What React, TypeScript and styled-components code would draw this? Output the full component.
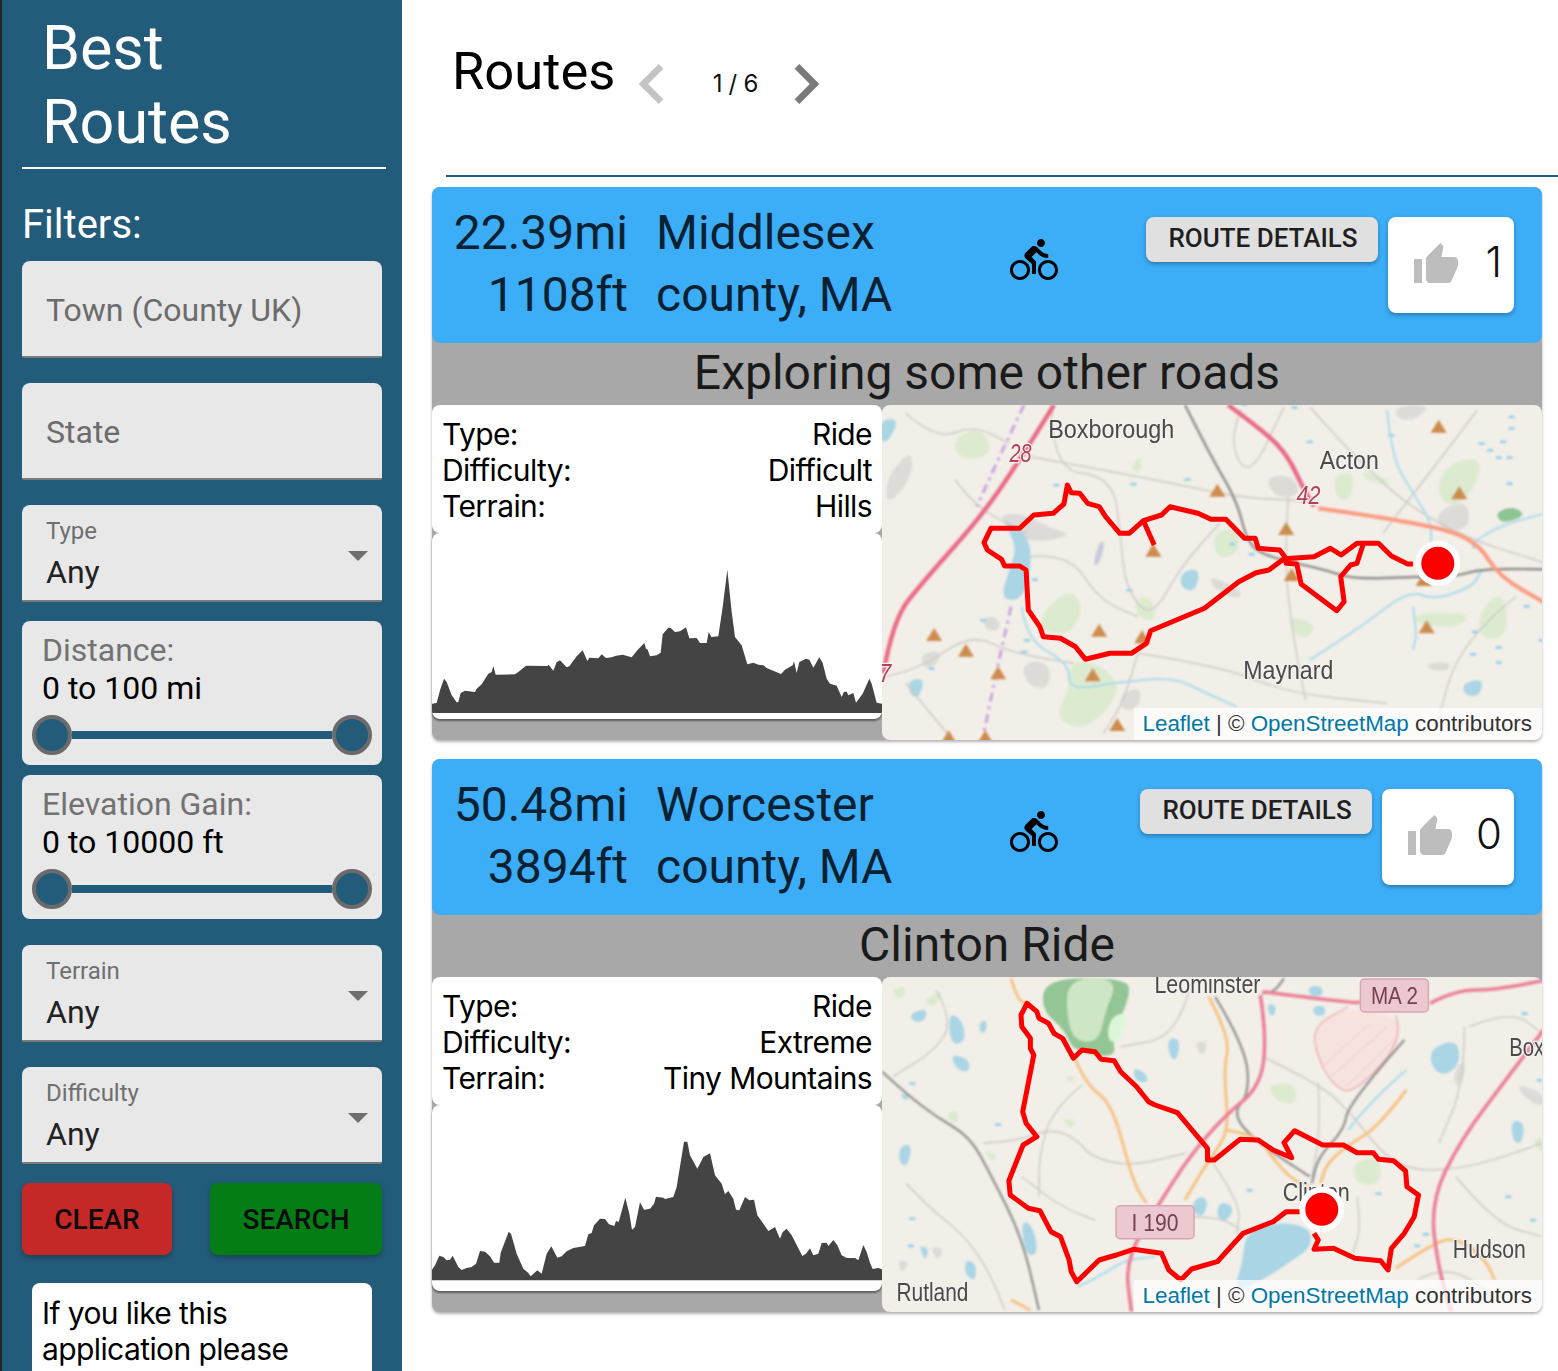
import React from 'react';
import styled, { createGlobalStyle } from 'styled-components';
import { MdChevronLeft, MdChevronRight, MdDirectionsBike, MdThumbUp } from 'react-icons/md';

const NAVY = '#235b7a';
const SYSTEM_FONT = 'Inter, "Liberation Sans", sans-serif';

const GlobalStyle = createGlobalStyle`
    html, body {
        margin: 0;
        padding: 0;
        background: #fff;
        font-family: Roboto, "Liberation Sans", sans-serif;
    }
    * {
        box-sizing: border-box;
    }
`;

const Page = styled.div`
    display: flex;
    width: 1558px;
    height: 1371px;
    overflow: hidden;
    border-left: 2px solid #20262a;
`;

const Sidebar = styled.aside`
    flex: 0 0 400px;
    display: flex;
    flex-direction: column;
    padding: 11px 0 0 20px;
    background: ${NAVY};
`;

const Brand = styled.h1`
    margin: 0;
    padding: 0 0 8px 20px;
    width: 364px;
    font-size: 61px;
    line-height: 74px;
    font-weight: 400;
    color: #fff;
    border-bottom: 2px solid #fff;
`;

const FiltersTitle = styled.div`
    margin: 33px 0 13px 0;
    font-size: 40px;
    line-height: 46px;
    color: #fff;
`;

const Field = styled.div<{ $top?: number }>`
    position: relative;
    flex: none;
    width: 360px;
    height: 97px;
    margin-top: ${props => props.$top ?? 0}px;
    padding: 2px 24px 0;
    display: flex;
    flex-direction: column;
    justify-content: center;
    background: #e8e8e8;
    border-radius: 8px 8px 2px 2px;
    border-bottom: 2px solid #7b7b7b;
`;

const Placeholder = styled.span`
    font-size: 32px;
    line-height: 36px;
    color: #6c6c6c;
`;

const SelectLabel = styled.span`
    font-size: 24px;
    line-height: 28px;
    color: #6f6f6f;
`;

const SelectValue = styled.span`
    margin-top: 8px;
    font-size: 32px;
    line-height: 38px;
    color: #222;
`;

const Caret = styled.i`
    position: absolute;
    right: 14px;
    top: 46px;
    width: 0;
    height: 0;
    border-left: 10px solid transparent;
    border-right: 10px solid transparent;
    border-top: 10px solid #6e6e6e;
`;

const SliderPanel = styled.div<{ $top: number }>`
    flex: none;
    width: 360px;
    height: 144px;
    margin-top: ${props => props.$top}px;
    padding: 11px 10px 0 10px;
    background: #e8e8e8;
    border-radius: 8px;
`;

const SliderLabel = styled.div`
    padding-left: 10px;
    font-size: 32px;
    line-height: 36px;
    color: #727272;
`;

const SliderValue = styled.div`
    margin-top: 1px;
    padding-left: 10px;
    font-size: 32px;
    line-height: 38px;
    color: #000;
`;

const SliderRow = styled.div`
    display: flex;
    align-items: center;
    margin-top: 8px;
`;

const Thumb = styled.span`
    flex: none;
    width: 40px;
    height: 40px;
    border-radius: 50%;
    background: ${NAVY};
    border: 4px solid #6b6b6b;
`;

const Track = styled.span`
    flex: 1;
    height: 8px;
    background: ${NAVY};
`;

const ActionRow = styled.div`
    display: flex;
    justify-content: space-between;
    width: 360px;
    margin-top: 19px;
`;

const ActionButton = styled.button<{ $color: string; $width: number }>`
    width: ${props => props.$width}px;
    height: 72px;
    padding: 0;
    border: 0;
    border-radius: 8px;
    background: ${props => props.$color};
    box-shadow: 0 3px 5px rgba(0, 0, 0, 0.25);
    font-family: inherit;
    font-size: 28px;
    font-weight: 500;
    color: #0c0c0c;
`;

const NoteBox = styled.div`
    width: 340px;
    height: 140px;
    margin: 28px 0 0 10px;
    padding: 12px 10px;
    background: #fff;
    border-radius: 8px;
    font-family: ${SYSTEM_FONT};
    font-size: 30px;
    letter-spacing: -0.6px;
    line-height: 36px;
    color: #000;
`;

const Main = styled.main`
    flex: 1;
    min-width: 0;
    padding: 0 16px 0 30px;
`;

const PageHead = styled.div`
    display: flex;
    align-items: flex-start;
    height: 175px;
    margin-left: 20px;
`;

const PageTitle = styled.h2`
    margin: 40px 0 0 0;
    font-size: 52.5px;
    line-height: 62px;
    font-weight: 400;
    color: #000;
`;

const Pager = styled.div`
    display: flex;
    align-items: center;
    margin: 44px 0 0 -3px;
`;

const PagerCount = styled.span`
    width: 74px;
    padding-left: 12px;
    text-align: center;
    font-family: ${SYSTEM_FONT};
    font-size: 24px;
    letter-spacing: -0.3px;
    line-height: 78px;
    color: #111;
`;

const PagerArrow = styled.span<{ $color: string }>`
    display: flex;
    color: ${props => props.$color};
`;

const HeadRule = styled.div`
    height: 2px;
    margin: 0 -16px 10px 14px;
    background: ${NAVY};
`;

const Card = styled.article`
    height: 553px;
    margin-bottom: 19px;
    background: #a8a8a8;
    border-radius: 8px;
    box-shadow: 0 2px 3px rgba(0, 0, 0, 0.3);
`;

const CardHeader = styled.header`
    display: flex;
    height: 156px;
    padding: 15px 28px 0 0;
    background: #3cadf7;
    border-radius: 8px;
`;

const Stats = styled.div`
    flex: none;
    width: 196px;
    text-align: right;
    font-size: 48px;
    line-height: 62px;
    color: #0b2131;
`;

const Place = styled.div`
    flex: none;
    width: 354px;
    margin-left: 28px;
    font-size: 48px;
    line-height: 62px;
    color: #0b2131;
`;

const BikeIcon = styled.div`
    flex: none;
    display: flex;
    margin-top: 34px;
    height: 48px;
    color: #000;
`;

const HeaderActions = styled.div`
    margin-left: auto;
    display: flex;
    align-items: flex-start;
    gap: 10px;
    padding-top: 15px;
`;

const DetailsButton = styled.button`
    width: 232px;
    height: 45px;
    padding: 0 0 3px 2px;
    border: 0;
    border-radius: 8px;
    background: #e0e0e0;
    box-shadow: 0 2px 4px rgba(0, 0, 0, 0.3);
    font-family: inherit;
    font-size: 26px;
    font-weight: 500;
    color: #1f1f1f;
`;

const LikeBox = styled.div`
    display: flex;
    align-items: center;
    gap: 22px;
    height: 96px;
    padding: 0 12px 0 24px;
    background: #fff;
    border-radius: 8px;
    box-shadow: 0 2px 4px rgba(0, 0, 0, 0.3);
    color: #bdbdbd;
`;

const LikeCount = styled.span`
    min-width: 20px;
    margin-top: -6px;
    text-align: right;
    font-family: ${SYSTEM_FONT};
    font-size: 42px;
    font-weight: 300;
    line-height: 48px;
    color: #111;
`;

const RideTitle = styled.div`
    height: 62px;
    text-align: center;
    font-size: 48px;
    line-height: 60px;
    color: #1a1a1a;
`;

const CardBody = styled.div`
    display: grid;
    grid-template-columns: 450px 660px;
    height: 335px;
`;

const InfoColumn = styled.div`
    display: flex;
    flex-direction: column;
`;

const InfoCard = styled.div`
    height: 128px;
    padding: 11px 10px 0 10px;
    background: #fff;
    border-radius: 8px;
    font-family: ${SYSTEM_FONT};
    font-size: 30px;
    letter-spacing: -0.6px;
    line-height: 36px;
    color: #000;
`;

const InfoRow = styled.div`
    display: flex;
    justify-content: space-between;
`;

const ChartCard = styled.div`
    height: 186px;
    background: #fff;
    border-radius: 8px;
    box-shadow: 0 2px 2px rgba(0, 0, 0, 0.45);
    overflow: hidden;

    svg {
        display: block;
    }
`;

const MapPane = styled.div`
    position: relative;
    overflow: hidden;
    border-radius: 8px;
    background: #f2efe9;

    svg {
        display: block;
    }
`;

const Attribution = styled.div`
    position: absolute;
    right: 0;
    bottom: 0;
    height: 32px;
    padding: 0 10px 0 8px;
    background: rgba(255, 255, 255, 0.72);
    font-family: "Liberation Sans", sans-serif;
    font-size: 22.4px;
    line-height: 32px;
    white-space: nowrap;
    color: #333;

    a {
        color: #0078a8;
        text-decoration: none;
    }
`;

// points below are read off the screenshot crops, the helper squeezes them into the 660x335 map box
type Pt = [number, number];

const toMap = ([x, y]: Pt, top: number): Pt => [x / 2.327 - 2, y / 3 - top];

const line = (points: Pt[], top: number) =>
    points.map(p => toMap(p, top).map(n => n.toFixed(1)).join(',')).join(' ');

const smooth = (points: Pt[], top: number) => {
    const p = points.map(pt => toMap(pt, top));
    let d = `M${p[0][0].toFixed(1)} ${p[0][1].toFixed(1)}`;
    for (let i = 1; i < p.length - 1; i++) {
        const mx = (p[i][0] + p[i + 1][0]) / 2;
        const my = (p[i][1] + p[i + 1][1]) / 2;
        d += `Q${p[i][0].toFixed(1)} ${p[i][1].toFixed(1)} ${mx.toFixed(1)} ${my.toFixed(1)}`;
    }
    const last = p[p.length - 1];
    return `${d}L${last[0].toFixed(1)} ${last[1].toFixed(1)}`;
};

// same idea for filled areas, rounds the corners of the outline
const rounded = (points: Pt[], top: number) => {
    const p = points.map(pt => toMap(pt, top));
    const mid = (a: Pt, b: Pt) => `${((a[0] + b[0]) / 2).toFixed(1)} ${((a[1] + b[1]) / 2).toFixed(1)}`;
    let d = `M${mid(p[p.length - 1], p[0])}`;
    p.forEach((pt, i) => {
        d += `Q${pt[0].toFixed(1)} ${pt[1].toFixed(1)} ${mid(pt, p[(i + 1) % p.length])}`;
    });
    return `${d}Z`;
};

interface Stroke {
    points: Pt[];
    color: string;
    width: number;
    dash?: string;
}

interface Label {
    text: string;
    at: Pt;
    width: number;
    color?: string;
    italic?: boolean;
}

interface Blob {
    points: Pt[];
    color: string;
}

interface MapData {
    top: number;
    blobs: Blob[];
    specks: Pt[];
    strokes: Stroke[];
    peaks: Pt[];
    badges: { at: Pt; w: number; text: string; textWidth: number }[];
    labels: Label[];
    route: Pt[];
    branch?: Pt[];
    marker: Pt;
}

const GREEN = '#dcebcf';
const WATER = '#a9d5e5';
const MINOR = '#cbc9c4';
const RIVER = '#aadce9';
const URBAN = '#dcdbd8';

const map1: MapData = {
    top: 5,
    blobs: [
        { color: URBAN, points: [[270, 345], [330, 340], [400, 385], [450, 405], [370, 428], [320, 410]] },
        { color: URBAN, points: [[895, 230], [960, 225], [980, 285], [920, 295]] },
        { color: URBAN, points: [[15, 230], [75, 145], [75, 235], [15, 320]] },
        { color: URBAN, points: [[1210, 15], [1285, 15], [1240, 65], [1195, 50]] },
        { color: URBAN, points: [[330, 785], [395, 785], [395, 870], [340, 855]] },
        { color: URBAN, points: [[1290, 340], [1365, 295], [1375, 385], [1310, 395]] },
        { color: URBAN, points: [[95, 760], [145, 750], [130, 800], [100, 805]] },
        { color: URBAN, points: [[240, 650], [275, 650], [280, 695], [245, 690]] },
        { color: URBAN, points: [[560, 880], [610, 860], [600, 930], [560, 930]] },
        { color: URBAN, points: [[770, 525], [845, 575], [830, 600], [770, 560]] },
        { color: URBAN, points: [[1270, 790], [1330, 785], [1320, 815], [1280, 810]] },
        { color: GREEN, points: [[1310, 200], [1395, 165], [1395, 245], [1340, 325], [1295, 290]] },
        { color: GREEN, points: [[375, 640], [440, 565], [475, 620], [445, 705], [375, 695]] },
        { color: GREEN, points: [[590, 600], [630, 585], [645, 665], [600, 655]] },
        { color: GREEN, points: [[1240, 640], [1375, 635], [1350, 685], [1250, 675]] },
        { color: GREEN, points: [[1390, 640], [1450, 565], [1465, 705], [1400, 725]] },
        { color: GREEN, points: [[445, 775], [525, 800], [565, 875], [480, 995], [405, 955], [440, 870]] },
        { color: GREEN, points: [[775, 395], [835, 385], [835, 465], [780, 475]] },
        { color: GREEN, points: [[950, 645], [1015, 670], [1000, 715], [960, 705]] },
        { color: GREEN, points: [[165, 120], [235, 75], [265, 165], [190, 185]] },
        { color: GREEN, points: [[1055, 225], [1105, 215], [1095, 305], [1060, 295]] },
        { color: GREEN, points: [[1120, 210], [1190, 240], [1180, 260], [1130, 240]] },
        { color: GREEN, points: [[580, 200], [610, 160], [605, 225]] },
        { color: '#8cc492', points: [[1430, 340], [1470, 318], [1505, 345], [1450, 372]] },
        { color: WATER, points: [[280, 350], [340, 400], [355, 470], [335, 600], [280, 600], [300, 510], [320, 440]] },
        { color: WATER, points: [[700, 515], [745, 505], [735, 575], [700, 565]] },
        { color: WATER, points: [[1355, 850], [1405, 835], [1395, 890], [1360, 885]] },
        { color: WATER, points: [[0, 60], [45, 55], [20, 125], [0, 125]] },
        { color: WATER, points: [[65, 840], [105, 835], [90, 895], [70, 885]] },
        { color: '#c7c9dd', points: [[510, 425], [525, 425], [510, 495], [495, 495]] },
    ],
    specks: [
        [1400, 130], [1420, 150], [1450, 125], [1470, 85], [1470, 50], [1440, 172], [1465, 172], [965, 22],
        [848, 12], [590, 252], [715, 238], [1000, 125], [1190, 105], [1385, 695], [1440, 742], [1380, 762],
        [1440, 787], [342, 720], [240, 660], [335, 755], [120, 805], [580, 570], [360, 538], [820, 432],
        [865, 462], [1505, 618], [1540, 720], [410, 255], [1465, 250], [1385, 440],
    ],
    strokes: [
        { color: MINOR, width: 1.4, points: [[350, 170], [640, 238], [830, 292], [960, 300], [1020, 310]] },
        { color: MINOR, width: 1.4, points: [[60, 40], [130, 120], [220, 75], [300, 130]] },
        { color: MINOR, width: 1.4, points: [[400, 30], [400, 210], [540, 230], [560, 400], [570, 560], [630, 660], [700, 500], [790, 370]] },
        { color: MINOR, width: 1.4, points: [[350, 470], [440, 460], [510, 600], [600, 650]] },
        { color: MINOR, width: 1.4, points: [[600, 760], [800, 800], [950, 880], [1180, 910]] },
        { color: MINOR, width: 1.4, points: [[950, 290], [940, 480], [960, 700], [990, 900]] },
        { color: MINOR, width: 1.4, points: [[1000, 20], [1150, 240], [1330, 400], [1550, 490]] },
        { color: MINOR, width: 1.4, points: [[1390, 30], [1290, 200], [1170, 400]] },
        { color: MINOR, width: 1.4, points: [[10, 830], [90, 810], [210, 700], [310, 760], [450, 790]] },
        { color: MINOR, width: 1.4, points: [[600, 760], [570, 900], [520, 1000]] },
        { color: MINOR, width: 1.4, points: [[1480, 590], [1350, 720], [1290, 1000]] },
        { color: MINOR, width: 1.4, points: [[175, 240], [220, 320], [340, 400]] },
        { color: MINOR, width: 1.4, points: [[60, 850], [130, 960], [170, 1020]] },
        { color: MINOR, width: 1.4, points: [[840, 30], [810, 120], [860, 240], [940, 20]] },
        { color: RIVER, width: 2.2, points: [[1000, 780], [1110, 690], [1230, 570], [1290, 600], [1380, 560], [1400, 510]] },
        { color: RIVER, width: 2, points: [[1180, 30], [1190, 170], [1240, 280], [1290, 380], [1270, 500]] },
        { color: RIVER, width: 2, points: [[330, 620], [340, 720], [440, 790], [440, 870], [540, 850], [680, 830], [760, 880], [830, 920]] },
        { color: RIVER, width: 2, points: [[1380, 430], [1430, 380], [1550, 340]] },
        { color: RIVER, width: 2, points: [[1240, 620], [1250, 700], [1240, 750]] },
        { color: '#8f8e8c', width: 2.4, points: [[710, 15], [770, 170], [830, 300], [855, 430], [900, 470], [1040, 510], [1100, 538], [1250, 530], [1340, 530], [1400, 506], [1550, 508]] },
        { color: '#cda5dd', width: 3, dash: '9 5 3 5', points: [[335, 15], [285, 150], [225, 320]] },
        { color: '#cda5dd', width: 3, dash: '9 5 3 5', points: [[305, 620], [280, 760], [240, 1010]] },
        { color: '#ea6a84', width: 4.4, points: [[8, 820], [30, 660], [100, 545], [235, 350], [320, 190], [405, 15]] },
        { color: '#ea6a84', width: 4.4, points: [[810, 15], [900, 100], [950, 170], [985, 265], [1010, 320]] },
        { color: '#fb9a80', width: 4, points: [[1020, 325], [1240, 365], [1385, 415], [1440, 530], [1550, 610]] },
    ],
    peaks: [
        [1300, 80], [1348, 280], [785, 272], [945, 387], [636, 452], [958, 525], [1272, 682], [510, 692],
        [610, 712], [126, 705], [200, 752], [275, 820], [495, 826], [552, 975], [160, 1012], [245, 1012], [1265, 540],
    ],
    badges: [],
    labels: [
        { text: 'Boxborough', at: [538, 114], width: 126 },
        { text: 'Acton', at: [1092, 206], width: 59 },
        { text: 'Maynard', at: [950, 838], width: 90 },
        { text: '28', at: [327, 187], width: 22, color: '#b5405a', italic: true },
        { text: '42', at: [997, 311], width: 24, color: '#b5405a', italic: true },
        { text: '7', at: [12, 847], width: 12, color: '#b5405a', italic: true },
    ],
    route: [
        [1240, 492], [1228, 492], [1190, 468], [1160, 430], [1110, 430], [1073, 465], [1048, 445], [1010, 470],
        [940, 476], [905, 510], [875, 518], [835, 545], [755, 625], [630, 692], [620, 730], [585, 760],
        [535, 760], [478, 778], [455, 740], [420, 715], [380, 710], [372, 680], [345, 630], [340, 510],
        [325, 498], [290, 498], [283, 478], [250, 450], [242, 428], [258, 385], [325, 385], [358, 345],
        [403, 340], [428, 312], [436, 255], [445, 278], [465, 280], [483, 310], [510, 320], [525, 350],
        [558, 400], [580, 400], [613, 362], [655, 345], [675, 320], [740, 340], [770, 358], [805, 358],
        [848, 415], [873, 415], [880, 445], [930, 450], [942, 470], [945, 490], [970, 492], [980, 552],
        [1063, 632], [1080, 605], [1072, 530], [1095, 495], [1110, 490], [1125, 430],
    ],
    branch: [[613, 362], [638, 435]],
    marker: [1298, 490],
};

const map2: MapData = {
    top: 7,
    blobs: [
        { color: '#f7e3de', points: [[1005, 170], [1090, 110], [1200, 135], [1220, 210], [1100, 375], [1055, 345], [1020, 270]] },
        { color: '#93c595', points: [[385, 25], [570, 25], [585, 70], [540, 200], [550, 265], [450, 245], [430, 180], [375, 120]] },
        { color: '#cfe6c6', points: [[435, 25], [555, 25], [525, 120], [510, 215], [455, 215], [435, 150]] },
        { color: '#dcf7d8', points: [[535, 140], [578, 125], [558, 215], [528, 215]] },
        { color: GREEN, points: [[900, 345], [965, 335], [970, 405], [920, 395]] },
        { color: GREEN, points: [[1095, 580], [1165, 555], [1165, 645], [1110, 645]] },
        { color: GREEN, points: [[20, 60], [65, 45], [50, 95]] },
        { color: GREEN, points: [[95, 95], [150, 55], [130, 115]] },
        { color: GREEN, points: [[428, 318], [458, 318], [445, 342]] },
        { color: GREEN, points: [[422, 445], [458, 448], [445, 482]] },
        { color: GREEN, points: [[150, 430], [185, 420], [180, 470]] },
        { color: GREEN, points: [[240, 540], [270, 550], [265, 580]] },
        { color: GREEN, points: [[1515, 510], [1545, 500], [1545, 560]] },
        { color: URBAN, points: [[1480, 340], [1545, 370], [1545, 415], [1500, 385]] },
        { color: URBAN, points: [[730, 215], [765, 215], [750, 265]] },
        { color: URBAN, points: [[115, 830], [150, 835], [135, 875]] },
        { color: URBAN, points: [[40, 870], [70, 875], [50, 915]] },
        { color: URBAN, points: [[1340, 290], [1365, 270], [1355, 350], [1335, 345]] },
        { color: WATER, points: [[850, 790], [920, 755], [1000, 770], [1005, 830], [950, 880], [890, 930], [820, 975], [845, 870]] },
        { color: WATER, points: [[165, 125], [195, 160], [198, 215], [168, 225], [160, 170]] },
        { color: WATER, points: [[165, 250], [210, 270], [205, 310], [175, 295]] },
        { color: WATER, points: [[70, 130], [110, 115], [105, 155], [75, 155]] },
        { color: WATER, points: [[668, 205], [698, 205], [692, 270], [675, 265]] },
        { color: WATER, points: [[588, 292], [618, 308], [625, 338], [595, 335]] },
        { color: WATER, points: [[1285, 230], [1345, 210], [1350, 285], [1310, 320], [1280, 285]] },
        { color: WATER, points: [[738, 678], [765, 688], [752, 745], [722, 722]] },
        { color: WATER, points: [[790, 692], [825, 710], [808, 755], [782, 742]] },
        { color: WATER, points: [[328, 748], [358, 770], [368, 855], [338, 855]] },
        { color: WATER, points: [[198, 868], [224, 880], [222, 935], [198, 915]] },
        { color: WATER, points: [[998, 48], [1028, 48], [1032, 78], [998, 78]] },
        { color: WATER, points: [[1008, 108], [1038, 108], [1032, 142], [1008, 132]] },
        { color: WATER, points: [[903, 98], [922, 108], [918, 138], [903, 132]] },
        { color: WATER, points: [[1468, 448], [1502, 460], [1492, 525], [1472, 512]] },
        { color: WATER, points: [[45, 370], [70, 375], [60, 395]] },
        { color: WATER, points: [[45, 530], [75, 520], [65, 590], [45, 580]] },
        { color: WATER, points: [[90, 825], [115, 835], [105, 875]] },
        { color: WATER, points: [[235, 150], [250, 155], [245, 190], [230, 185]] },
    ],
    specks: [
        [1250, 827], [1270, 792], [1520, 750], [1462, 680], [72, 827], [75, 745], [275, 463], [75, 340],
        [1535, 330], [1500, 130], [1160, 670], [860, 660],
    ],
    strokes: [
        { color: MINOR, width: 1.4, points: [[60, 640], [120, 720], [200, 800], [260, 920], [290, 1020]] },
        { color: MINOR, width: 1.4, points: [[240, 520], [330, 510], [400, 475], [460, 510], [490, 560], [580, 590], [710, 550]] },
        { color: MINOR, width: 1.4, points: [[470, 345], [400, 420], [370, 560], [370, 680]] },
        { color: MINOR, width: 1.4, points: [[500, 750], [430, 720], [330, 620]] },
        { color: MINOR, width: 1.4, points: [[775, 580], [840, 700], [830, 790]] },
        { color: MINOR, width: 1.4, points: [[720, 740], [790, 740], [840, 780]] },
        { color: MINOR, width: 1.4, points: [[890, 260], [1020, 340], [1090, 420], [1200, 600], [1360, 600], [1540, 520]] },
        { color: MINOR, width: 1.4, points: [[1360, 170], [1360, 340], [1300, 520]] },
        { color: MINOR, width: 1.4, points: [[1110, 680], [1120, 770], [1100, 850]] },
        { color: MINOR, width: 1.4, points: [[1340, 620], [1430, 760], [1540, 800]] },
        { color: MINOR, width: 1.4, points: [[720, 60], [690, 200], [560, 230]] },
        { color: MINOR, width: 1.4, points: [[1250, 930], [1320, 880], [1440, 990]] },
        { color: MINOR, width: 1.4, points: [[130, 60], [170, 150], [130, 240], [30, 320]] },
        { color: MINOR, width: 1.4, points: [[1370, 170], [1470, 120], [1540, 190]] },
        { color: MINOR, width: 1.4, points: [[1020, 340], [1025, 480], [1005, 620]] },
        { color: '#f2c6c2', width: 1, points: [[1030, 290], [1140, 160]] },
        { color: '#f2c6c2', width: 1, points: [[1050, 320], [1180, 170]] },
        { color: '#f2c6c2', width: 1, points: [[1085, 350], [1200, 205]] },
        { color: '#e7a6ac', width: 1.2, points: [[1200, 135], [1220, 210], [1100, 375], [1055, 345], [1020, 270], [1005, 170], [1090, 110]] },
        { color: RIVER, width: 2.2, points: [[1225, 300], [1180, 350], [1120, 430], [1090, 480]] },
        { color: RIVER, width: 2, points: [[460, 950], [510, 920], [570, 870], [640, 860]] },
        { color: '#8f8e8c', width: 2.2, points: [[5, 305], [60, 370], [130, 440], [210, 500], [260, 620], [330, 800], [370, 1020]] },
        { color: '#8f8e8c', width: 2.2, points: [[780, 80], [850, 230], [860, 370], [820, 430], [870, 510], [1000, 620]] },
        { color: '#8f8e8c', width: 2.2, points: [[1220, 210], [1090, 400], [1080, 480], [1020, 560], [1005, 640]] },
        { color: '#8f8e8c', width: 2.2, points: [[940, 25], [920, 65], [890, 70]] },
        { color: '#f6c283', width: 3, points: [[305, 25], [320, 95], [350, 100]] },
        { color: '#f6c283', width: 3, points: [[455, 270], [480, 345], [540, 400], [590, 640], [620, 700]] },
        { color: '#f6c283', width: 3, points: [[765, 80], [815, 200], [800, 300], [810, 450], [800, 510], [750, 600], [710, 690]] },
        { color: '#f6c283', width: 3, points: [[805, 480], [880, 495], [910, 560], [960, 630], [1000, 650]] },
        { color: '#f6c283', width: 3, points: [[1225, 360], [1160, 470], [1090, 525], [1040, 580], [1025, 640]] },
        { color: '#f6c283', width: 3, points: [[1200, 895], [1280, 825], [1340, 800], [1410, 870], [1430, 930]] },
        { color: '#f6c283', width: 3, points: [[305, 990], [350, 1020]] },
        { color: '#ec7f97', width: 3.6, points: [[885, 75], [900, 200], [885, 350], [800, 440], [720, 560], [650, 700], [570, 870], [585, 1025]] },
        { color: '#ec7f97', width: 3.6, points: [[890, 65], [1100, 100], [1125, 95]] },
        { color: '#ec7f97', width: 3.6, points: [[1280, 100], [1340, 60], [1430, 60], [1550, 30]] },
        { color: '#ec7f97', width: 3.6, points: [[1550, 170], [1480, 290], [1350, 510], [1280, 700], [1300, 900], [1330, 1025]] },
    ],
    peaks: [],
    badges: [
        { at: [1197, 75], w: 68, text: 'MA 2', textWidth: 47 },
        { at: [640, 755], w: 78, text: 'I 190', textWidth: 47 },
    ],
    labels: [
        { text: 'Leominster', at: [762, 68], width: 106 },
        { text: 'Box', at: [1505, 258], width: 35 },
        { text: 'Clinton', at: [1015, 694], width: 67 },
        { text: 'Hudson', at: [1418, 864], width: 73 },
        { text: 'Rutland', at: [122, 994], width: 72 },
    ],
    route: [
        [980, 725], [945, 725], [915, 755], [845, 790], [785, 875], [725, 897], [700, 930], [672, 900],
        [655, 850], [590, 838], [550, 855], [510, 870], [458, 935], [445, 905], [440, 870], [420, 800],
        [398, 785], [372, 722], [345, 715], [303, 675], [300, 632], [333, 525], [365, 500], [340, 460],
        [332, 425], [358, 255], [350, 235], [350, 205], [330, 170], [328, 135], [342, 100], [365, 125],
        [370, 145], [392, 160], [405, 190], [425, 205], [450, 265], [470, 240], [500, 245], [515, 268],
        [545, 272], [560, 305], [597, 350], [625, 395], [640, 405], [692, 428], [762, 535], [762, 570],
        [778, 570], [838, 508], [880, 510], [915, 540], [958, 563], [940, 518], [965, 482], [1030, 525],
        [1078, 525], [1110, 548], [1148, 548], [1160, 568], [1195, 572], [1223, 603], [1226, 650], [1253, 675],
        [1243, 740], [1220, 790], [1190, 835], [1182, 900], [1165, 872], [1105, 865], [1055, 835], [1010, 838],
        [1020, 810], [1010, 790],
    ],
    marker: [1028, 718],
};

const RouteMap = ({ data }: { data: MapData }) => {
    const { top } = data;
    const [mx, my] = toMap(data.marker, top);
    return (
        <svg width={660} height={335} viewBox="0 0 660 335">
            <g style={{ filter: 'blur(0.8px)' }}>
                {data.blobs.map((b, i) => (
                    <path key={i} d={rounded(b.points, top)} fill={b.color} />
                ))}
                {data.specks.map((s, i) => {
                    const [x, y] = toMap(s, top);
                    return <rect key={i} x={x - 3} y={y - 1} width={6} height={2.5} fill="#8fcdea" />;
                })}
                {data.strokes.map((s, i) => (
                    <path
                        key={i}
                        d={smooth(s.points, top)}
                        fill="none"
                        stroke={s.color}
                        strokeWidth={s.width}
                        strokeDasharray={s.dash}
                    />
                ))}
                {data.peaks.map((p, i) => {
                    const [x, y] = toMap(p, top);
                    return (
                        <polygon
                            key={i}
                            points={`${x},${y - 7} ${x + 8},${y + 6} ${x - 8},${y + 6}`}
                            fill="#cd8c4e"
                        />
                    );
                })}
            </g>
            <g style={{ filter: 'blur(0.5px)' }}>
                {data.badges.map(b => {
                    const [x, y] = toMap(b.at, top);
                    return (
                        <g key={b.text}>
                            <rect
                                x={x - b.w / 2}
                                y={y - 16}
                                width={b.w}
                                height={33}
                                rx={4}
                                fill="#ecc9d0"
                                stroke="#d9a5b1"
                                strokeWidth={1.5}
                            />
                            <text
                                x={x}
                                y={y + 9}
                                textAnchor="middle"
                                fontFamily="Liberation Sans, sans-serif"
                                fontSize={24}
                                fill="#75404f"
                                textLength={b.textWidth}
                                lengthAdjust="spacingAndGlyphs"
                            >
                                {b.text}
                            </text>
                        </g>
                    );
                })}
                {data.labels.map(l => {
                    const [x, y] = toMap(l.at, top);
                    return (
                        <text
                            key={l.text}
                            x={x}
                            y={y}
                            textAnchor="middle"
                            fontFamily="Liberation Sans, sans-serif"
                            fontSize={25}
                            fontStyle={l.italic ? 'italic' : undefined}
                            fill={l.color ?? '#4a4a4a'}
                            stroke="#f4f2ee"
                            strokeWidth={2.5}
                            paintOrder="stroke"
                            textLength={l.width}
                            lengthAdjust="spacingAndGlyphs"
                        >
                            {l.text}
                        </text>
                    );
                })}
            </g>
            <polyline
                points={line(data.route, top)}
                fill="none"
                stroke="#ff0000"
                strokeWidth={5}
                strokeLinejoin="round"
            />
            {data.branch && (
                <polyline points={line(data.branch, top)} fill="none" stroke="#ff0000" strokeWidth={5} />
            )}
            <circle cx={mx} cy={my} r={19.5} fill="#ff0000" stroke="#fff" strokeWidth={6} />
        </svg>
    );
};

const profile1 =
    '6,520 20,518 30,480 42,445 50,455 65,495 80,516 85,515 92,488 105,481 135,485 140,475 155,462 175,430 185,425 190,407 197,433 255,432 265,425 288,406 352,407 356,403 370,421 380,396 390,390 410,411 418,408 440,378 458,360 472,392 478,382 505,384 515,372 528,383 545,381 558,376 578,373 605,381 622,360 643,338 648,355 653,358 660,378 680,375 692,367 698,312 715,292 722,293 735,305 750,303 768,291 778,324 800,323 810,338 830,338 836,305 844,320 865,318 878,230 892,118 905,245 915,320 935,345 952,402 970,397 985,403 1000,405 1010,413 1053,431 1065,418 1088,405 1092,393 1100,428 1108,395 1128,385 1138,388 1150,412 1168,381 1178,398 1190,445 1200,460 1220,466 1235,500 1242,484 1250,484 1255,495 1270,488 1278,517 1298,490 1318,445 1325,460 1340,517 1356,520 1356,548 6,548';

const profile2 =
    '6,508 15,495 28,466 40,470 50,480 60,478 68,466 85,500 95,509 110,503 125,500 138,490 150,452 165,454 180,468 192,487 208,487 212,458 228,415 236,394 243,400 260,460 280,505 295,518 302,528 322,510 335,520 350,460 364,438 382,472 395,468 410,453 430,443 465,437 475,402 485,398 492,375 510,355 525,356 537,372 553,377 558,362 566,365 586,292 598,340 606,388 615,380 630,306 642,328 660,325 672,310 678,289 700,292 705,296 730,290 740,260 762,124 772,124 780,165 802,205 820,170 840,159 855,225 875,250 885,282 895,272 910,295 918,328 928,330 945,290 958,300 972,298 982,345 1000,370 1015,392 1035,380 1050,415 1058,395 1070,385 1085,405 1117,467 1128,460 1140,444 1150,465 1165,460 1175,428 1190,427 1195,437 1210,419 1222,435 1235,465 1250,473 1275,473 1285,480 1300,434 1310,455 1320,487 1328,506 1345,503 1356,507 1356,540 6,540';

const Select = ({ label, top }: { label: string; top: number }) => (
    <Field $top={top}>
        <SelectLabel>{label}</SelectLabel>
        <SelectValue>Any</SelectValue>
        <Caret />
    </Field>
);

const RangeFilter = ({ label, value, top }: { label: string; value: string; top: number }) => (
    <SliderPanel $top={top}>
        <SliderLabel>{label}</SliderLabel>
        <SliderValue>{value}</SliderValue>
        <SliderRow>
            <Thumb />
            <Track />
            <Thumb />
        </SliderRow>
    </SliderPanel>
);

interface RouteInfo {
    distance: string;
    climb: string;
    place: [string, string];
    likes: number;
    title: string;
    difficulty: string;
    terrain: string;
    profile: string;
    viewBox: string;
    map: MapData;
}

const routes: RouteInfo[] = [
    {
        distance: '22.39mi',
        climb: '1108ft',
        place: ['Middlesex', 'county, MA'],
        likes: 1,
        title: 'Exploring some other roads',
        difficulty: 'Difficult',
        terrain: 'Hills',
        profile: profile1,
        viewBox: '6 8 1350 558',
        map: map1,
    },
    {
        distance: '50.48mi',
        climb: '3894ft',
        place: ['Worcester', 'county, MA'],
        likes: 0,
        title: 'Clinton Ride',
        difficulty: 'Extreme',
        terrain: 'Tiny Mountains',
        profile: profile2,
        viewBox: '6 14 1350 558',
        map: map2,
    },
];

const RouteCard = ({ route }: { route: RouteInfo }) => (
    <Card>
        <CardHeader>
            <Stats>
                {route.distance}
                <br />
                {route.climb}
            </Stats>
            <Place>
                {route.place[0]}
                <br />
                {route.place[1]}
            </Place>
            <BikeIcon>
                <MdDirectionsBike size={48} />
            </BikeIcon>
            <HeaderActions>
                <DetailsButton>ROUTE DETAILS</DetailsButton>
                <LikeBox>
                    <MdThumbUp size={48} />
                    <LikeCount>{route.likes}</LikeCount>
                </LikeBox>
            </HeaderActions>
        </CardHeader>
        <RideTitle>{route.title}</RideTitle>
        <CardBody>
            <InfoColumn>
                <InfoCard>
                    <InfoRow>
                        <span>Type:</span>
                        <span>Ride</span>
                    </InfoRow>
                    <InfoRow>
                        <span>Difficulty:</span>
                        <span>{route.difficulty}</span>
                    </InfoRow>
                    <InfoRow>
                        <span>Terrain:</span>
                        <span>{route.terrain}</span>
                    </InfoRow>
                </InfoCard>
                <ChartCard>
                    <svg width={450} height={186} viewBox={route.viewBox}>
                        <polygon points={route.profile} fill="#444" />
                    </svg>
                </ChartCard>
            </InfoColumn>
            <MapPane>
                <RouteMap data={route.map} />
                <Attribution>
                    <a href="#leaflet">Leaflet</a> | © <a href="#osm">OpenStreetMap</a> contributors
                </Attribution>
            </MapPane>
        </CardBody>
    </Card>
);

const App = () => (
    <Page>
        <GlobalStyle />
        <Sidebar>
            <Brand>
                Best
                <br />
                Routes
            </Brand>
            <FiltersTitle>Filters:</FiltersTitle>
            <Field>
                <Placeholder>Town (County UK)</Placeholder>
            </Field>
            <Field $top={25}>
                <Placeholder>State</Placeholder>
            </Field>
            <Select label="Type" top={25} />
            <RangeFilter label="Distance:" value="0 to 100 mi" top={19} />
            <RangeFilter label="Elevation Gain:" value="0 to 10000 ft" top={10} />
            <Select label="Terrain" top={26} />
            <Select label="Difficulty" top={25} />
            <ActionRow>
                <ActionButton $color="#c62828" $width={150}>
                    CLEAR
                </ActionButton>
                <ActionButton $color="#047d17" $width={172}>
                    SEARCH
                </ActionButton>
            </ActionRow>
            <NoteBox>
                If you like this
                <br />
                application please
            </NoteBox>
        </Sidebar>
        <Main>
            <PageHead>
                <PageTitle>Routes</PageTitle>
                <Pager>
                    <PagerArrow $color="#c4c4c4">
                        <MdChevronLeft size={80} />
                    </PagerArrow>
                    <PagerCount>1 / 6</PagerCount>
                    <PagerArrow $color="#7a7a7a">
                        <MdChevronRight size={80} />
                    </PagerArrow>
                </Pager>
            </PageHead>
            <HeadRule />
            {routes.map(route => (
                <RouteCard key={route.title} route={route} />
            ))}
        </Main>
    </Page>
);

export default App;
